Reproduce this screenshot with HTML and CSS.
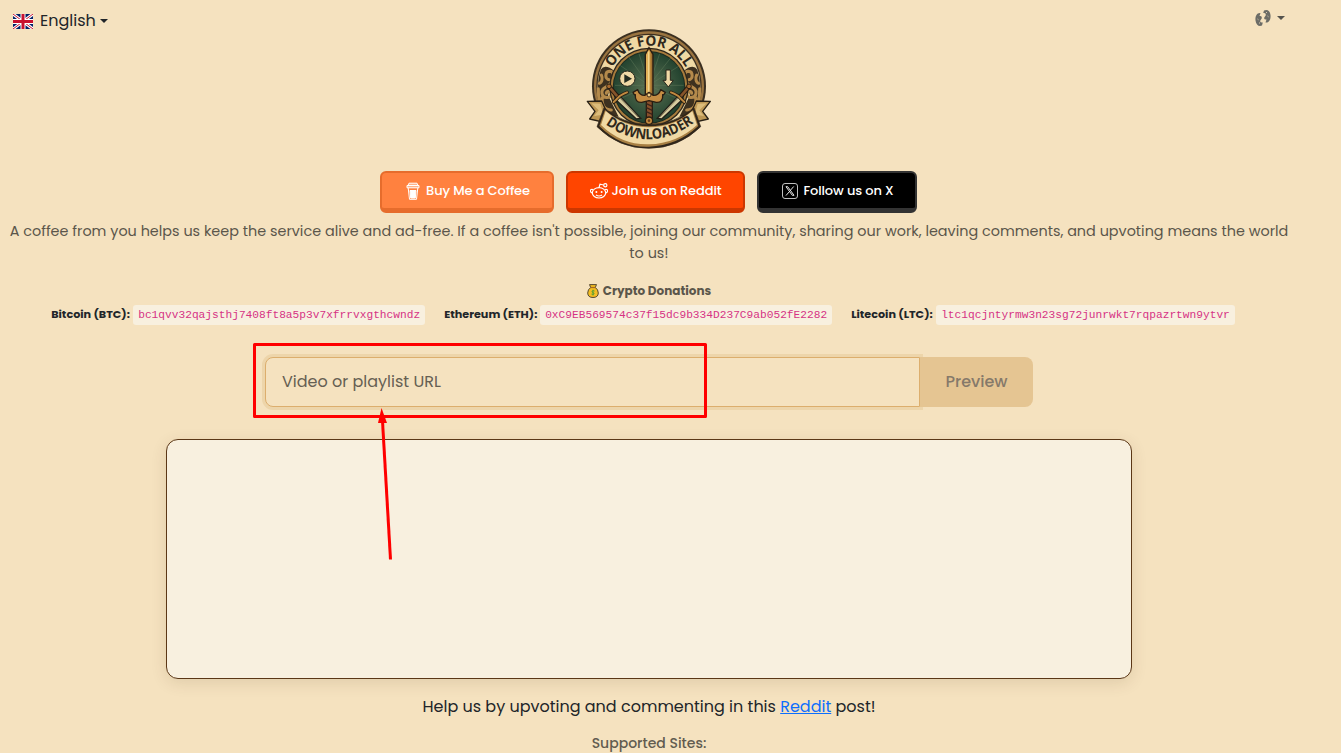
FILE: index.html
```html
<!DOCTYPE html>
<html lang="en">
<head>
    <meta charset="UTF-8">
    <meta name="viewport" content="width=device-width, initial-scale=1.0">
    <title>One For All Downloader</title>
    <link rel="stylesheet" href="styles.css">
</head>
<body>
    <div class="page">
        <header class="header">
            <div class="language">
                <svg class="flag" viewBox="0 0 20 15">
                    <rect width="20" height="15" fill="#012169"/>
                    <path d="M0 0l20 15M20 0L0 15" stroke="#fff" stroke-width="3"/>
                    <path d="M0 0l20 15M20 0L0 15" stroke="#c8102e" stroke-width="1"/>
                    <path d="M10 0v15M0 7.5h20" stroke="#fff" stroke-width="5"/>
                    <path d="M10 0v15M0 7.5h20" stroke="#c8102e" stroke-width="3"/>
                </svg>
                <span class="language-name">English</span>
                <span class="caret"></span>
            </div>
            <svg class="logo" viewBox="0 0 420 396">
                <defs>
                    <path id="topArc" d="M83 195a124 124 0 0 1 248 0"/>
                    <path id="bottomArc" d="M76 307Q207 398 342 303"/>
                    <radialGradient id="green"><stop offset="0" stop-color="#5c7253"/><stop offset="1" stop-color="#23432f"/></radialGradient>
                    <linearGradient id="gold"><stop offset="0" stop-color="#e6b85d"/><stop offset=".5" stop-color="#d29c43"/><stop offset="1" stop-color="#8a5b25"/></linearGradient>
                </defs>
                <circle cx="207" cy="193" r="171" fill="#3a2f20"/>
                <circle cx="207" cy="193" r="165" fill="#9a7440"/>
                <circle cx="207" cy="193" r="158" fill="#3d3020"/>
                <circle cx="207" cy="193" r="154" fill="#efd9a4"/>
                <!-- scrollwork on both sides of the ring -->
                <g id="scroll">
                    <path d="M62 143Q75 124 104 148L84 220l32 64-45-8Q42 205 62 143z" fill="#3d311f"/>
                    <path d="M88 173c-14 0-14-24 0-25 17 0 15 24 4 36-11 13-29 12-26 31 3 15 27 16 27 1 0-12-15-10-14-2M58 184c8-2 11-15 6-25M67 227c-3 22 7 37 27 37M93 187c12 7 13 22 8 34M55 200c-1 28 3 48 20 63" fill="none" stroke="#b48a4b" stroke-width="9" stroke-linecap="round"/>
                </g>
                <use href="#scroll" transform="matrix(-1 0 0 1 414 0)"/>
                <circle cx="207" cy="196" r="119" fill="#2d261b"/>
                <circle cx="207" cy="196" r="115" fill="#a77b3c"/>
                <circle cx="207" cy="196" r="109" fill="#1b2a20"/>
                <circle cx="207" cy="196" r="106" fill="url(#green)"/>
                <path d="M207 190L120 130M207 190L145 103M207 190l-30-95M207 190l32-95M207 190l65-82M207 190l90-58M207 190h104M207 190H105M207 190l90 42M207 190l-90 42" stroke="#5f7959" stroke-width="3" opacity=".5"/>
                <text class="logo-top"><textPath href="#topArc" startOffset="50%" text-anchor="middle" textLength="268" lengthAdjust="spacingAndGlyphs">ONE FOR ALL</textPath></text>
                <!-- crossed daggers -->
                <g id="dagger">
                    <path d="M116 218l66 71-13 2-64-60z" fill="#d9cda0" stroke="#211f18" stroke-width="4"/>
                    <path d="M116 224l59 62" stroke="#7e7757" stroke-width="3"/>
                    <path d="M89 196l23 27" stroke="#24180f" stroke-width="14"/>
                    <path d="M89 196l23 27" stroke="#87542a" stroke-width="8"/>
                    <path d="M101 240q8-7 14-14t26-15" fill="none" stroke="#281e12" stroke-width="11" stroke-linecap="round"/>
                    <path d="M101 240q8-7 14-14t26-15" fill="none" stroke="#c18a40" stroke-width="6" stroke-linecap="round"/>
                    <circle cx="87" cy="193" r="7" fill="#a76b30" stroke="#281e12" stroke-width="3"/>
                </g>
                <use href="#dagger" transform="matrix(-1 0 0 1 414 0)"/>
                <!-- ribbon -->
                <path d="M22 238l43-1 19 42-8 23-47-11 16-23zM391 238l-42-1-19 42 8 23 47-11-17-23z" fill="#bd9754" stroke="#282015" stroke-width="4" stroke-linejoin="round"/>
                <path d="M34 244l27 1 9 33-28 4 14-17zM380 244l-27 1-9 33 28 4-14-17z" fill="#dcbc7a"/>
                <path d="M72 257Q128 307 207 307T342 257L362 314Q297 378 207 379T51 314Z" fill="#30261a" stroke="#30261a" stroke-width="2" stroke-linejoin="round"/>
                <path d="M75 264Q130 313 207 313T339 264L355 312Q292 371 207 374T58 312Z" fill="#a77f43"/>
                <path d="M77 267Q132 316 207 316T337 267L351 309Q290 365 207 367T63 309Z" fill="#f0d9a4"/>
                <text class="logo-bottom"><textPath href="#bottomArc" startOffset="50%" text-anchor="middle" textLength="285" lengthAdjust="spacingAndGlyphs">DOWNLOADER</textPath></text>
                <!-- main sword -->
                <path d="M207 77l-11 20v122h23V97z" fill="url(#gold)" stroke="#291d12" stroke-width="4"/>
                <path d="M206 88v123" stroke="#f1d48a" stroke-width="5"/>
                <path d="M199 235h18v55h-18z" fill="#88502b" stroke="#291d12" stroke-width="4"/>
                <path d="M199 245l18 8M199 257l18 8M199 269l18 8" stroke="#3b2419" stroke-width="4"/>
                <path d="M207 211l12 9q17 1 23-17l14 8q-5 9-8 7 2 24-19 23l-22-5-22 5q-21 1-19-23-3 2-7-7l14-8q6 18 22 17z" fill="#c58d43" stroke="#291d12" stroke-width="4" stroke-linejoin="round"/>
                <circle cx="207" cy="219" r="6" fill="#f0d18c" stroke="#422b16" stroke-width="3"/>
                <circle cx="207" cy="296" r="11" fill="#c58b3e" stroke="#291d12" stroke-width="4"/>
                <circle cx="207" cy="296" r="4" fill="#694120"/>
                <circle cx="142" cy="170" r="23" fill="#f0d9a6" stroke="#26251a" stroke-width="3"/>
                <path d="M133 157l23 13-23 13z" fill="#242b20"/>
                <path d="M258 144h13v31h9l-15 20-16-20h9z" fill="#f0d9a6" stroke="#26251a" stroke-width="3"/>
            </svg>
            <div class="theme">
                <svg class="theme-icon" viewBox="0 0 16 18">
                    <path d="M5.500 4C2 3.500 0 7 .5 11.500 1 16 4 18 7 16.500l.8-3C5 14 4.500 12 6 10.500S7 6.500 4.500 7z" fill="#6c6c66"/>
                    <path d="M10.500 13.500c3.500.5 5.500-3 5-7.500C15 1.500 12 0 9 1.500l-.8 2.500C11 3.500 11.500 6 10 7.500S9 11 11.500 10.500z" fill="#6c6c66"/>
                    <path d="M2.500 10l1 .8M12.500 7l1 .8M4 14h1M11 3.500h1" stroke="#d8cbb0"/>
                </svg>
                <span class="caret"></span>
            </div>
        </header>

        <div class="social-buttons">
            <a class="social-button coffee">
                <svg class="coffee-icon" viewBox="0 0 14 18" fill="none" stroke="#fff">
                    <path d="M3 1.200h8l1 2.300H2zM1 3.500h12v2.300H1z" fill="#fff" fill-opacity=".4"/>
                    <path d="M2.200 6l1.300 11.300h7L11.800 6"/>
                    <path d="M4 8.500h6L9.300 16H4.700z" fill="#fff"/>
                </svg>
                <span>Buy Me a Coffee</span>
            </a>
            <a class="social-button reddit">
                <svg class="reddit-icon" viewBox="0 0 18 16" fill="none" stroke="#fff" stroke-width="1.200">
                    <ellipse cx="9" cy="9.800" rx="6.700" ry="5.200"/>
                    <path d="M3 7C1.800 5.300-.6 7 1 9.200l1.200.8M15 7c1.200-1.700 3.600 0 2 2.200l-1.200.8M9 4.600l1-3.400 3.600.8M6 12q3 2 6 0"/>
                    <circle cx="15.300" cy="2.300" r="1.600"/>
                    <circle cx="6.400" cy="8.900" r="1" fill="#fff" stroke="none"/>
                    <circle cx="11.600" cy="8.900" r="1" fill="#fff" stroke="none"/>
                </svg>
                <span>Join us on Reddit</span>
            </a>
            <a class="social-button twitter">
                <svg class="x-icon" viewBox="0 0 16 16" fill="none" stroke="#fff">
                    <rect x=".5" y=".5" width="15" height="15" rx="2.500" stroke-opacity=".75"/>
                    <path d="M4 3.700h1.700l6.300 8.600h-1.700zM11.700 3.500L8.500 7.200M7.400 8.600L4 12.500" stroke-width=".9"/>
                </svg>
                <span>Follow us on X</span>
            </a>
        </div>

        <p class="support-text">A coffee from you helps us keep the service alive and ad-free. If a coffee isn't possible, joining our community, sharing our work, leaving comments, and upvoting means the world<br>to us!</p>

        <section class="crypto">
            <div class="crypto-title">
                <svg class="money-bag" viewBox="0 0 12 14">
                    <path d="M2.500 .6h7L8.300 3.500q3 2 3 5.500c0 3-2 4.500-5.300 4.500S.7 12 .7 9q0-3.500 3-5.500z" fill="#f3bd22" stroke="#443b2c" stroke-width=".9"/>
                    <path d="M3.500 3.500h5" stroke="#a46a24" stroke-width="1.200"/>
                    <path d="M7.500 7C5.500 5.700 4 8 6 8.600s1 2.700-1.500 1.500M6 5.800v5.700" fill="none" stroke="#539f34" stroke-width="1"/>
                </svg>
                <span>Crypto Donations</span>
            </div>
            <div class="wallets">
                <div class="wallet"><strong class="btc">Bitcoin (BTC):</strong><code>bc1qvv32qajsthj7408ft8a5p3v7xfrrvxgthcwndz</code></div>
                <div class="wallet"><strong class="eth">Ethereum (ETH):</strong><code>0xC9EB569574c37f15dc9b334D237C9ab052fE2282</code></div>
                <div class="wallet"><strong class="ltc">Litecoin (LTC):</strong><code>ltc1qcjntyrmw3n23sg72junrwkt7rqpazrtwn9ytvr</code></div>
            </div>
        </section>

        <form class="url-form">
            <input class="url-input" type="text" placeholder="Video or playlist URL">
            <button class="preview-button" type="button" disabled>Preview</button>
            <svg class="annotation" viewBox="0 0 456 220">
                <path d="M1.500 2.500h451v72h-451z" fill="none" stroke="red" stroke-width="3" stroke-linejoin="round"/>
                <path d="M137.500 217.500L129.500 79" stroke="red" stroke-width="3"/>
                <path d="M128.500 66l5.500 15h-9z" fill="red"/>
            </svg>
        </form>

        <div class="preview-card"></div>
        <p class="help-text">Help us by upvoting and commenting in this <a href="#">Reddit</a> post!</p>
        <p class="sites-title">Supported Sites:</p>
    </div>
</body>
</html>
```
FILE: styles.css
```css
* {
    box-sizing: border-box;
}

body {
    margin: 0;
    height: 753px;
    overflow: hidden;
    background-color: #f5e2bf;
    color: #212529;
    font-family: Poppins, Inter, "Open Sans", sans-serif;
    font-size: 16px;
    line-height: 24px;
}

.page {
    width: 1298px;
}

.header {
    display: grid;
    grid-template-columns: 1fr 140px 1fr;
    align-items: start;
    height: 171px;
    padding-left: 1px;
}

.language {
    display: flex;
    align-items: center;
    padding: 9px 0 0 12px;
}

.flag {
    width: 20px;
    height: 15px;
    margin-right: 7px;
}

.caret {
    border: 4px solid transparent;
    border-top-color: currentColor;
    border-bottom: 0;
    margin-left: 4px;
}

.logo {
    width: 140px;
    height: 132px;
    margin-top: 22px;
}

.logo-top,
.logo-bottom {
    font-family: "Noto Sans", "Open Sans", sans-serif;
    font-weight: 700;
    fill: #30291c;
}

.logo-top {
    font-size: 43px;
}

.logo-bottom {
    font-size: 43px;
}

.theme {
    display: flex;
    align-items: center;
    justify-content: flex-end;
    padding: 9px 13px 0 0;
    color: #55534d;
}

.theme-icon {
    width: 16px;
    height: 18px;
}

.theme .caret {
    margin-left: 6px;
}

.social-buttons {
    display: flex;
    justify-content: center;
    gap: 12px;
    padding-right: 1px;
}

.social-button {
    display: flex;
    align-items: center;
    justify-content: center;
    height: 42px;
    padding-left: 2px;
    border: 2px solid;
    border-bottom-width: 5px;
    border-radius: 6px;
    color: white;
    font-size: 13px;
    font-weight: 500;
    letter-spacing: -0.12px;
    white-space: nowrap;
}

.coffee {
    width: 174px;
    background-color: #ff813f;
    border-color: #e66c2c;
}

.reddit {
    width: 179px;
    padding-left: 0;
    background-color: #ff4500;
    border-color: #cc3700;
}

.twitter {
    width: 160px;
    background-color: black;
    border-color: #333;
}

.coffee-icon {
    width: 14px;
    height: 18px;
    margin-right: 6px;
}

.reddit-icon {
    width: 18px;
    height: 16px;
    margin-right: 4px;
}

.x-icon {
    width: 16px;
    height: 16px;
    margin-right: 5px;
}

.support-text {
    margin: 8px 0 0;
    color: #5b564b;
    font-size: 14.4px;
    line-height: 21.6px;
    text-align: center;
    white-space: nowrap;
}

.crypto {
    margin-top: 17px;
}

.crypto-title {
    display: flex;
    justify-content: center;
    align-items: center;
    gap: 4px;
    height: 19px;
    color: #5b564b;
    font-size: 12px;
    font-weight: 700;
}

.money-bag {
    width: 12px;
    height: 14px;
}

.wallets {
    display: flex;
    justify-content: center;
    gap: 19px;
    margin-top: 5px;
    padding-right: 12px;
}

.wallet {
    display: flex;
    align-items: center;
    height: 20px;
    font-size: 11.2px;
    white-space: nowrap;
}

.wallet strong {
    width: 82px;
    padding-bottom: 2px;
}

.wallet .eth {
    width: 96px;
}

.wallet .ltc {
    width: 85px;
}

.wallet code {
    height: 20px;
    padding: 0 5px;
    border-radius: 3px;
    background-color: #f8f0df;
    color: #d63384;
    font-family: "Courier New", "Liberation Mono", monospace;
    font-size: 11.2px;
    line-height: 20px;
}

.url-form {
    position: relative;
    display: flex;
    width: 768px;
    height: 50px;
    margin: 32px auto 0;
}

.url-input {
    width: 655px;
    padding: 0 16px;
    border: 1px solid #dcae6d;
    border-radius: 8px 0 0 8px;
    background-color: #f5e2bf;
    box-shadow: 0 0 0 3px #edd5aa;
    font: inherit;
    outline: none;
}

.url-input::placeholder {
    color: #665f53;
}

.preview-button {
    width: 113px;
    padding: 0;
    border: 0;
    border-radius: 0 8px 8px 0;
    background-color: #e5c592;
    color: #85796a;
    font: inherit;
    font-weight: 500;
}

/* arrow and box highlighting the URL field */
.annotation {
    position: absolute;
    left: -12px;
    top: -15px;
    width: 456px;
    height: 220px;
    z-index: 2;
}

.preview-card {
    width: 966px;
    height: 240px;
    margin: 32px auto 0;
    border: 1px solid #5b3716;
    border-radius: 12px;
    background-color: #f8f0df;
    box-shadow: 0 4px 16px rgba(75, 50, 20, 0.12);
}

.help-text {
    margin: 16px 0 0;
    text-align: center;
}

.help-text a {
    color: #0d6efd;
}

.sites-title {
    margin: 13px 0 0;
    color: #625c50;
    font-size: 14px;
    font-weight: 500;
    line-height: 22px;
    text-align: center;
}
```
